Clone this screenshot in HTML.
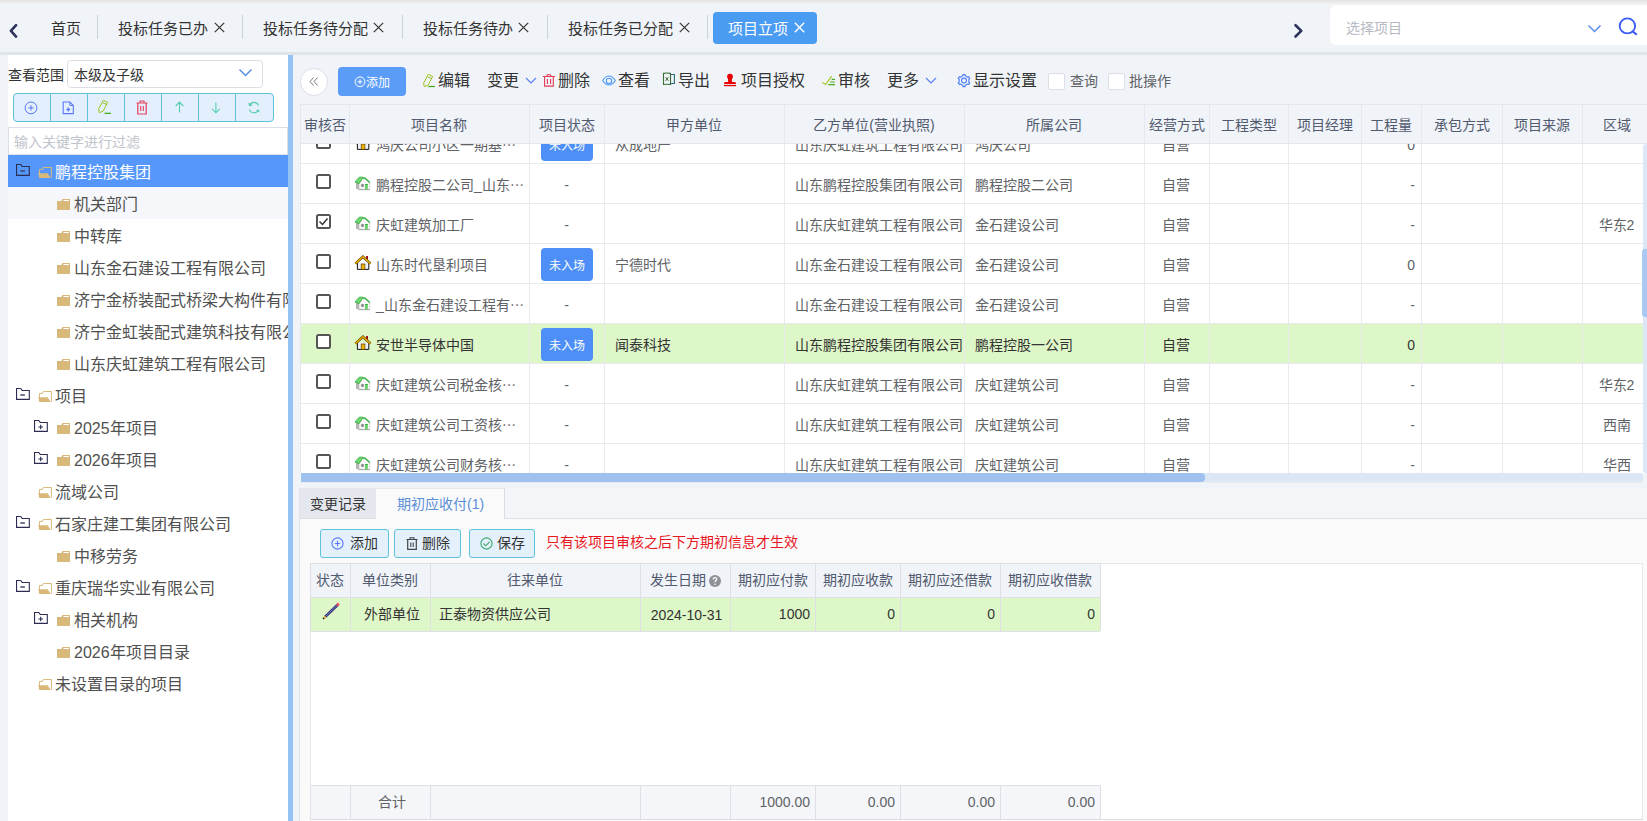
<!DOCTYPE html><html lang="zh-CN"><head><meta charset="utf-8"><style>
html,body{margin:0;padding:0}
body{width:1647px;height:821px;overflow:hidden;position:relative;background:#f0f3f8;font-family:"Liberation Sans",sans-serif}
.t{position:absolute;white-space:nowrap}
.b{position:absolute;box-sizing:border-box}
svg.b{overflow:visible}
</style></head><body>
<div class="b" style="left:0px;top:0px;width:1647px;height:5px;background:linear-gradient(#e3e3e3,#f6f6f6)"></div>
<div class="b" style="left:0px;top:52px;width:1647px;height:3px;background:#dfe3ea"></div>
<svg class="b" style="left:8px;top:22px" width="12" height="18" viewBox="0 0 12 18"><polyline points="8.1,3.2 2.9,8.9 8.1,14.6" fill="none" stroke="#2d3358" stroke-width="2.6" stroke-linecap="round" stroke-linejoin="round"/></svg>
<div class="t" style="left:51px;top:19px;font-size:15px;line-height:20px;color:#333;">首页</div>
<div class="b" style="left:97px;top:15px;width:1px;height:24px;background:#cdd1d8"></div>
<div class="b" style="left:242px;top:15px;width:1px;height:24px;background:#cdd1d8"></div>
<div class="b" style="left:402px;top:15px;width:1px;height:24px;background:#cdd1d8"></div>
<div class="b" style="left:547px;top:15px;width:1px;height:24px;background:#cdd1d8"></div>
<div class="b" style="left:707px;top:15px;width:1px;height:24px;background:#cdd1d8"></div>
<div class="t" style="left:118px;top:19px;font-size:15px;line-height:20px;color:#333;">投标任务已办</div>
<svg class="b" style="left:214px;top:22px" width="11" height="11" viewBox="0 0 11 11"><path d="M0.8,0.8 L10.2,10.2 M10.2,0.8 L0.8,10.2" stroke="#333" stroke-width="1.2" fill="none"/></svg>
<div class="t" style="left:263px;top:19px;font-size:15px;line-height:20px;color:#333;">投标任务待分配</div>
<svg class="b" style="left:373px;top:22px" width="11" height="11" viewBox="0 0 11 11"><path d="M0.8,0.8 L10.2,10.2 M10.2,0.8 L0.8,10.2" stroke="#333" stroke-width="1.2" fill="none"/></svg>
<div class="t" style="left:423px;top:19px;font-size:15px;line-height:20px;color:#333;">投标任务待办</div>
<svg class="b" style="left:518px;top:22px" width="11" height="11" viewBox="0 0 11 11"><path d="M0.8,0.8 L10.2,10.2 M10.2,0.8 L0.8,10.2" stroke="#333" stroke-width="1.2" fill="none"/></svg>
<div class="t" style="left:568px;top:19px;font-size:15px;line-height:20px;color:#333;">投标任务已分配</div>
<svg class="b" style="left:679px;top:22px" width="11" height="11" viewBox="0 0 11 11"><path d="M0.8,0.8 L10.2,10.2 M10.2,0.8 L0.8,10.2" stroke="#333" stroke-width="1.2" fill="none"/></svg>
<div class="b" style="left:713px;top:12px;width:104px;height:32px;background:#4a9bf2;border-radius:4px"></div>
<div class="t" style="left:728px;top:19px;font-size:15px;line-height:20px;color:#fff;">项目立项</div>
<svg class="b" style="left:794px;top:22px" width="11" height="11" viewBox="0 0 11 11"><path d="M0.8,0.8 L10.2,10.2 M10.2,0.8 L0.8,10.2" stroke="#fff" stroke-width="1.4" fill="none"/></svg>
<svg class="b" style="left:1291px;top:22px" width="12" height="18" viewBox="0 0 12 18"><polyline points="4.5,3.2 10.3,8.85 4.5,14.5" fill="none" stroke="#2d3358" stroke-width="2.6" stroke-linecap="round" stroke-linejoin="round"/></svg>
<div class="b" style="left:1330px;top:5px;width:330px;height:40px;background:#fff;border-radius:6px"></div>
<div class="t" style="left:1346px;top:18px;font-size:14px;line-height:20px;color:#b6bac2;">选择项目</div>
<svg class="b" style="left:1587px;top:24px" width="15" height="10" viewBox="0 0 15 10"><polyline points="1.5,1.5 7.5,7.5 13.5,1.5" fill="none" stroke="#5b8de6" stroke-width="1.5"/></svg>
<svg class="b" style="left:1617px;top:16px" width="22" height="21" viewBox="0 0 22 21"><ellipse cx="10.4" cy="9.9" rx="7.7" ry="7.5" fill="none" stroke="#3d5ef5" stroke-width="1.9"/><line x1="16" y1="15.6" x2="19.2" y2="18.2" stroke="#3d5ef5" stroke-width="2.1" stroke-linecap="round"/></svg>
<div class="b" style="left:8px;top:55px;width:280px;height:766px;background:#fff"></div>
<div class="b" style="left:288px;top:55px;width:5px;height:766px;background:#95c2f5"></div>
<div class="t" style="left:8px;top:65px;font-size:14px;line-height:20px;color:#333;">查看范围</div>
<div class="b" style="left:67px;top:60px;width:196px;height:28px;border:1px solid #dcdfe6;border-radius:4px;background:#fff"></div>
<div class="t" style="left:74px;top:65px;font-size:14px;line-height:20px;color:#333;">本级及子级</div>
<svg class="b" style="left:238px;top:68px" width="16" height="10" viewBox="0 0 16 10"><polyline points="1.5,1.5 7.5,7.5 13.5,1.5" fill="none" stroke="#5b8de6" stroke-width="1.5"/></svg>
<div class="b" style="left:13px;top:93px;width:261px;height:29px;background:#e3effc;border:1px solid #5ec2da;border-radius:4px"></div>
<div class="b" style="left:50px;top:93px;width:1px;height:29px;background:#5ec2da"></div>
<div class="b" style="left:87px;top:93px;width:1px;height:29px;background:#5ec2da"></div>
<div class="b" style="left:124px;top:93px;width:1px;height:29px;background:#5ec2da"></div>
<div class="b" style="left:161px;top:93px;width:1px;height:29px;background:#5ec2da"></div>
<div class="b" style="left:198px;top:93px;width:1px;height:29px;background:#5ec2da"></div>
<div class="b" style="left:235px;top:93px;width:1px;height:29px;background:#5ec2da"></div>
<svg class="b" style="left:24px;top:101px" width="14" height="14" viewBox="0 0 14 14"><circle cx="7" cy="6.9" r="5.9" fill="none" stroke="#5a78f8" stroke-width="1"/><path d="M7,4.2 V9.6 M4.3,6.9 H9.7" stroke="#5a78f8" stroke-width="1"/></svg>
<svg class="b" style="left:62px;top:101px" width="13" height="14" viewBox="0 0 13 14"><path d="M1.2,1 H7.8 L11.3,4.5 V12.6 H1.2 Z" fill="none" stroke="#5a78f8" stroke-width="1.1"/><path d="M7.8,1 V4.5 H11.3" fill="none" stroke="#5a78f8" stroke-width="0.9"/><path d="M6.3,6.6 V10.4 M4.4,8.5 H8.2" stroke="#5a78f8" stroke-width="1.3"/></svg>
<svg class="b" style="left:97px;top:99px" width="15" height="15" viewBox="0 0 15 15"><path d="M2.3,13.6 L1.6,10 L6.3,1.3 L10.7,3.4 L6,12.3 Z" fill="none" stroke="#a2c21c" stroke-width="1"/><path d="M5.8,3.9 L9.9,5.6" stroke="#8fc020" stroke-width="1"/><path d="M7.5,14.3 H14" stroke="#3aa812" stroke-width="1.2"/></svg>
<svg class="b" style="left:136px;top:100px" width="12" height="15" viewBox="0 0 12 15"><path d="M0.5,3 H11.5 M4,3 V1 H8 V3" fill="none" stroke="#e8405a" stroke-width="1.1"/><path d="M1.8,3 V14 H10.2 V3" fill="none" stroke="#e8405a" stroke-width="1.2"/><path d="M4.7,6 V11 M7.3,6 V11" stroke="#e8405a" stroke-width="1.1"/></svg>
<svg class="b" style="left:175px;top:101px" width="10" height="12" viewBox="0 0 10 12"><path d="M4.5,1 V11.5 M0.6,5 L4.5,1 L8.4,5" fill="none" stroke="#57cdb0" stroke-width="1.1"/></svg>
<svg class="b" style="left:211px;top:102px" width="10" height="12" viewBox="0 0 10 12"><path d="M4.9,0.5 V10.8 M1,6.8 L4.9,10.8 L8.8,6.8" fill="none" stroke="#57cdb0" stroke-width="1.1"/></svg>
<svg class="b" style="left:248px;top:102px" width="13" height="12" viewBox="0 0 13 12"><path d="M10.6,3.4 A4.9,4.9 0 0 0 1.6,3.2" fill="none" stroke="#57cdb0" stroke-width="1.1"/><path d="M1.4,7.6 A4.9,4.9 0 0 0 10.4,7.9" fill="none" stroke="#57cdb0" stroke-width="1.1"/><path d="M0.8,0.8 L1.5,3.6 L4.2,2.9" fill="none" stroke="#57cdb0" stroke-width="1.1"/><path d="M11.6,10.6 L10.9,7.4 L7.9,8.4 Z" fill="#57cdb0"/></svg>
<div class="b" style="left:8px;top:127px;width:280px;height:28px;border:1px solid #dcdfe6;background:#fff"></div>
<div class="t" style="left:14px;top:132px;font-size:14px;line-height:20px;color:#c0c4cc;">输入关键字进行过滤</div>
<div class="b" style="left:8px;top:155px;width:280px;height:560px;overflow:hidden">
<div class="b" style="left:0px;top:0px;width:280px;height:32px;background:#5597fa"></div>
<svg class="b" style="left:8px;top:9px" width="14" height="12" viewBox="0 0 14 12"><path d="M0.55,11.4 V0.55 H4.8 L6.2,2.5 H13.3 V11.4 Z" fill="none" stroke="#2b2d52" stroke-width="1.1"/><path d="M4.3,7 H8.9" stroke="#3a4060" stroke-width="1.4"/></svg>
<svg class="b" style="left:30px;top:12px" width="14" height="11" viewBox="0 0 14 11"><path d="M1.5,10.8 V2.4 H4.5 L5.3,0.5 H13.4 V10.8" fill="none" stroke="#d8b979" stroke-width="1"/><path d="M0,6.2 H9.7 L12.6,10.9 H1.9 Z" fill="#d8b979"/></svg>
<div class="t" style="left:47px;top:8px;font-size:16px;line-height:20px;color:#fff;">鹏程控股集团</div>
<div class="b" style="left:0px;top:32px;width:280px;height:32px;background:#f5f7fa"></div>
<svg class="b" style="left:49px;top:44px" width="13" height="11" viewBox="0 0 13 11"><path d="M0,2 H4.3 L5.3,0 H13 V11 H0 Z" fill="#d8b979"/><path d="M6.5,1.5 H11.9" stroke="#fff" stroke-width="1" fill="none"/></svg>
<div class="t" style="left:66px;top:40px;font-size:16px;line-height:20px;color:#505050;">机关部门</div>
<svg class="b" style="left:49px;top:76px" width="13" height="11" viewBox="0 0 13 11"><path d="M0,2 H4.3 L5.3,0 H13 V11 H0 Z" fill="#d8b979"/><path d="M6.5,1.5 H11.9" stroke="#fff" stroke-width="1" fill="none"/></svg>
<div class="t" style="left:66px;top:72px;font-size:16px;line-height:20px;color:#505050;">中转库</div>
<svg class="b" style="left:49px;top:108px" width="13" height="11" viewBox="0 0 13 11"><path d="M0,2 H4.3 L5.3,0 H13 V11 H0 Z" fill="#d8b979"/><path d="M6.5,1.5 H11.9" stroke="#fff" stroke-width="1" fill="none"/></svg>
<div class="t" style="left:66px;top:104px;font-size:16px;line-height:20px;color:#505050;">山东金石建设工程有限公司</div>
<svg class="b" style="left:49px;top:140px" width="13" height="11" viewBox="0 0 13 11"><path d="M0,2 H4.3 L5.3,0 H13 V11 H0 Z" fill="#d8b979"/><path d="M6.5,1.5 H11.9" stroke="#fff" stroke-width="1" fill="none"/></svg>
<div class="t" style="left:66px;top:136px;font-size:16px;line-height:20px;color:#505050;">济宁金桥装配式桥梁大构件有限公司</div>
<svg class="b" style="left:49px;top:172px" width="13" height="11" viewBox="0 0 13 11"><path d="M0,2 H4.3 L5.3,0 H13 V11 H0 Z" fill="#d8b979"/><path d="M6.5,1.5 H11.9" stroke="#fff" stroke-width="1" fill="none"/></svg>
<div class="t" style="left:66px;top:168px;font-size:16px;line-height:20px;color:#505050;">济宁金虹装配式建筑科技有限公司</div>
<svg class="b" style="left:49px;top:204px" width="13" height="11" viewBox="0 0 13 11"><path d="M0,2 H4.3 L5.3,0 H13 V11 H0 Z" fill="#d8b979"/><path d="M6.5,1.5 H11.9" stroke="#fff" stroke-width="1" fill="none"/></svg>
<div class="t" style="left:66px;top:200px;font-size:16px;line-height:20px;color:#505050;">山东庆虹建筑工程有限公司</div>
<svg class="b" style="left:8px;top:233px" width="14" height="12" viewBox="0 0 14 12"><path d="M0.55,11.4 V0.55 H4.8 L6.2,2.5 H13.3 V11.4 Z" fill="none" stroke="#2b2d52" stroke-width="1.1"/><path d="M4.3,7 H8.9" stroke="#3a4060" stroke-width="1.4"/></svg>
<svg class="b" style="left:30px;top:236px" width="14" height="11" viewBox="0 0 14 11"><path d="M1.5,10.8 V2.4 H4.5 L5.3,0.5 H13.4 V10.8" fill="none" stroke="#d8b979" stroke-width="1"/><path d="M0,6.2 H9.7 L12.6,10.9 H1.9 Z" fill="#d8b979"/></svg>
<div class="t" style="left:47px;top:232px;font-size:16px;line-height:20px;color:#505050;">项目</div>
<svg class="b" style="left:26px;top:265px" width="14" height="12" viewBox="0 0 14 12"><path d="M0.55,11.4 V0.55 H4.8 L6.2,2.5 H13.3 V11.4 Z" fill="none" stroke="#2b2d52" stroke-width="1.1"/><path d="M4.4,7 H9 M6.7,4.7 V9.3" stroke="#2b2d52" stroke-width="1.1"/></svg>
<svg class="b" style="left:49px;top:268px" width="13" height="11" viewBox="0 0 13 11"><path d="M0,2 H4.3 L5.3,0 H13 V11 H0 Z" fill="#d8b979"/><path d="M6.5,1.5 H11.9" stroke="#fff" stroke-width="1" fill="none"/></svg>
<div class="t" style="left:66px;top:264px;font-size:16px;line-height:20px;color:#505050;">2025年项目</div>
<svg class="b" style="left:26px;top:297px" width="14" height="12" viewBox="0 0 14 12"><path d="M0.55,11.4 V0.55 H4.8 L6.2,2.5 H13.3 V11.4 Z" fill="none" stroke="#2b2d52" stroke-width="1.1"/><path d="M4.4,7 H9 M6.7,4.7 V9.3" stroke="#2b2d52" stroke-width="1.1"/></svg>
<svg class="b" style="left:49px;top:300px" width="13" height="11" viewBox="0 0 13 11"><path d="M0,2 H4.3 L5.3,0 H13 V11 H0 Z" fill="#d8b979"/><path d="M6.5,1.5 H11.9" stroke="#fff" stroke-width="1" fill="none"/></svg>
<div class="t" style="left:66px;top:296px;font-size:16px;line-height:20px;color:#505050;">2026年项目</div>
<svg class="b" style="left:30px;top:332px" width="14" height="11" viewBox="0 0 14 11"><path d="M1.5,10.8 V2.4 H4.5 L5.3,0.5 H13.4 V10.8" fill="none" stroke="#d8b979" stroke-width="1"/><path d="M0,6.2 H9.7 L12.6,10.9 H1.9 Z" fill="#d8b979"/></svg>
<div class="t" style="left:47px;top:328px;font-size:16px;line-height:20px;color:#505050;">流域公司</div>
<svg class="b" style="left:8px;top:361px" width="14" height="12" viewBox="0 0 14 12"><path d="M0.55,11.4 V0.55 H4.8 L6.2,2.5 H13.3 V11.4 Z" fill="none" stroke="#2b2d52" stroke-width="1.1"/><path d="M4.3,7 H8.9" stroke="#3a4060" stroke-width="1.4"/></svg>
<svg class="b" style="left:30px;top:364px" width="14" height="11" viewBox="0 0 14 11"><path d="M1.5,10.8 V2.4 H4.5 L5.3,0.5 H13.4 V10.8" fill="none" stroke="#d8b979" stroke-width="1"/><path d="M0,6.2 H9.7 L12.6,10.9 H1.9 Z" fill="#d8b979"/></svg>
<div class="t" style="left:47px;top:360px;font-size:16px;line-height:20px;color:#505050;">石家庄建工集团有限公司</div>
<svg class="b" style="left:49px;top:396px" width="13" height="11" viewBox="0 0 13 11"><path d="M0,2 H4.3 L5.3,0 H13 V11 H0 Z" fill="#d8b979"/><path d="M6.5,1.5 H11.9" stroke="#fff" stroke-width="1" fill="none"/></svg>
<div class="t" style="left:66px;top:392px;font-size:16px;line-height:20px;color:#505050;">中移劳务</div>
<svg class="b" style="left:8px;top:425px" width="14" height="12" viewBox="0 0 14 12"><path d="M0.55,11.4 V0.55 H4.8 L6.2,2.5 H13.3 V11.4 Z" fill="none" stroke="#2b2d52" stroke-width="1.1"/><path d="M4.3,7 H8.9" stroke="#3a4060" stroke-width="1.4"/></svg>
<svg class="b" style="left:30px;top:428px" width="14" height="11" viewBox="0 0 14 11"><path d="M1.5,10.8 V2.4 H4.5 L5.3,0.5 H13.4 V10.8" fill="none" stroke="#d8b979" stroke-width="1"/><path d="M0,6.2 H9.7 L12.6,10.9 H1.9 Z" fill="#d8b979"/></svg>
<div class="t" style="left:47px;top:424px;font-size:16px;line-height:20px;color:#505050;">重庆瑞华实业有限公司</div>
<svg class="b" style="left:26px;top:457px" width="14" height="12" viewBox="0 0 14 12"><path d="M0.55,11.4 V0.55 H4.8 L6.2,2.5 H13.3 V11.4 Z" fill="none" stroke="#2b2d52" stroke-width="1.1"/><path d="M4.4,7 H9 M6.7,4.7 V9.3" stroke="#2b2d52" stroke-width="1.1"/></svg>
<svg class="b" style="left:49px;top:460px" width="13" height="11" viewBox="0 0 13 11"><path d="M0,2 H4.3 L5.3,0 H13 V11 H0 Z" fill="#d8b979"/><path d="M6.5,1.5 H11.9" stroke="#fff" stroke-width="1" fill="none"/></svg>
<div class="t" style="left:66px;top:456px;font-size:16px;line-height:20px;color:#505050;">相关机构</div>
<svg class="b" style="left:49px;top:492px" width="13" height="11" viewBox="0 0 13 11"><path d="M0,2 H4.3 L5.3,0 H13 V11 H0 Z" fill="#d8b979"/><path d="M6.5,1.5 H11.9" stroke="#fff" stroke-width="1" fill="none"/></svg>
<div class="t" style="left:66px;top:488px;font-size:16px;line-height:20px;color:#505050;">2026年项目目录</div>
<svg class="b" style="left:30px;top:524px" width="14" height="11" viewBox="0 0 14 11"><path d="M1.5,10.8 V2.4 H4.5 L5.3,0.5 H13.4 V10.8" fill="none" stroke="#d8b979" stroke-width="1"/><path d="M0,6.2 H9.7 L12.6,10.9 H1.9 Z" fill="#d8b979"/></svg>
<div class="t" style="left:47px;top:520px;font-size:16px;line-height:20px;color:#505050;">未设置目录的项目</div>
</div>
<div class="b" style="left:300px;top:68px;width:28px;height:28px;border:1px solid #dcdfe6;border-radius:50%;background:#fff"></div>
<svg class="b" style="left:309px;top:77px" width="10" height="10" viewBox="0 0 10 10"><polyline points="4.6,0.5 1,4.5 4.6,8.5" fill="none" stroke="#666" stroke-width="0.9"/><polyline points="8.6,0.5 5,4.5 8.6,8.5" fill="none" stroke="#666" stroke-width="0.9"/></svg>
<div class="b" style="left:338px;top:67px;width:68px;height:29px;background:#5b9cf8;border-radius:4px"></div>
<svg class="b" style="left:354px;top:76px" width="12" height="12" viewBox="0 0 12 12"><circle cx="6" cy="5.8" r="4.9" fill="none" stroke="#fff" stroke-width="1"/><path d="M6,3.3 V8.3 M3.5,5.8 H8.5" stroke="#fff" stroke-width="1"/></svg>
<div class="t" style="left:366px;top:73px;font-size:12px;line-height:20px;color:#fff;">添加</div>
<svg class="b" style="left:422px;top:73px" width="15" height="15" viewBox="0 0 15 15"><path d="M2.3,13.6 L1.6,10 L6.3,1.3 L10.7,3.4 L6,12.3 Z" fill="none" stroke="#a2c21c" stroke-width="1"/><path d="M5.8,3.9 L9.9,5.6" stroke="#8fc020" stroke-width="1"/><path d="M6.3,13.5 H12.9" stroke="#3aa812" stroke-width="1.2"/></svg>
<div class="t" style="left:438px;top:71px;font-size:16px;line-height:20px;color:#333;">编辑</div>
<div class="t" style="left:487px;top:71px;font-size:16px;line-height:20px;color:#333;">变更</div>
<svg class="b" style="left:525px;top:77px" width="12" height="8" viewBox="0 0 12 8"><polyline points="1,1 6,6 11,1" fill="none" stroke="#5c7ff0" stroke-width="1.2"/></svg>
<svg class="b" style="left:542px;top:73px" width="14" height="15" viewBox="0 0 14 15"><path d="M0.9,3.5 H12.9 M4.8,3.5 L5.3,1.8 H8.5 L9,3.5" fill="none" stroke="#e63a55" stroke-width="1.1"/><path d="M2.6,3.5 V13.1 H11.3 V3.5" fill="none" stroke="#e63a55" stroke-width="1.1"/><path d="M5.4,6 V11 M8.6,6 V11" stroke="#e63a55" stroke-width="1.1"/></svg>
<div class="t" style="left:558px;top:71px;font-size:16px;line-height:20px;color:#333;">删除</div>
<svg class="b" style="left:602px;top:75px" width="16" height="11" viewBox="0 0 16 11"><path d="M0.6,5.5 Q3.5,1 7,1 Q10.5,1 13.4,5.5 Q10.5,10 7,10 Q3.5,10 0.6,5.5 Z" fill="none" stroke="#4d9cf8" stroke-width="1.1"/><circle cx="7" cy="5.9" r="2.7" fill="none" stroke="#4d9cf8" stroke-width="1.1"/></svg>
<div class="t" style="left:618px;top:71px;font-size:16px;line-height:20px;color:#333;">查看</div>
<svg class="b" style="left:662px;top:72px" width="14" height="14" viewBox="0 0 14 14"><path d="M1.5,1.4 Q4.5,0.7 8.5,1.4 V12.5 Q4.5,11.9 1.5,12.5 Z" fill="none" stroke="#3b6e34" stroke-width="1.1"/><path d="M8.5,2.5 H12.4 V11.5 H8.5" fill="none" stroke="#2a6a78" stroke-width="1.1"/><path d="M3.6,5.2 L6.4,8.8 M6.4,5.2 L3.6,8.8" stroke="#3b6e34" stroke-width="1"/></svg>
<div class="t" style="left:678px;top:71px;font-size:16px;line-height:20px;color:#333;">导出</div>
<svg class="b" style="left:723px;top:73px" width="14" height="15" viewBox="0 0 14 15"><circle cx="7" cy="3.6" r="2.9" fill="#e80000"/><rect x="5.1" y="4" width="3.8" height="5.2" fill="#e80000"/><path d="M1.6,9 H12.4 L13,10.9 H1 Z" fill="#e80000"/><rect x="1" y="11.9" width="12" height="1.3" fill="#e80000"/></svg>
<div class="t" style="left:741px;top:71px;font-size:16px;line-height:20px;color:#333;">项目授权</div>
<svg class="b" style="left:821px;top:74px" width="15" height="13" viewBox="0 0 15 13"><polyline points="1.3,8.4 4.6,10.5 10.6,2.1" fill="none" stroke="#a6c21e" stroke-width="1.1"/><path d="M10.6,5.4 H14 M9.2,8 H13.8 M7.2,10.6 H14" stroke="#4aaa20" stroke-width="1.1"/></svg>
<div class="t" style="left:838px;top:71px;font-size:16px;line-height:20px;color:#333;">审核</div>
<div class="t" style="left:887px;top:71px;font-size:16px;line-height:20px;color:#333;">更多</div>
<svg class="b" style="left:925px;top:77px" width="12" height="8" viewBox="0 0 12 8"><polyline points="1,1 6,6 11,1" fill="none" stroke="#5c7ff0" stroke-width="1.2"/></svg>
<svg class="b" style="left:957px;top:74px" width="14" height="14" viewBox="0 0 14 14"><path d="M4.55,2.36 L5.81,1.85 L5.94,0.59 L8.06,0.59 L8.19,1.85 L9.45,2.36 L10.52,3.20 L11.67,2.68 L12.73,4.51 L11.71,5.25 L11.90,6.60 L11.71,7.95 L12.73,8.69 L11.67,10.52 L10.52,10.00 L9.45,10.84 L8.19,11.35 L8.06,12.61 L5.94,12.61 L5.81,11.35 L4.55,10.84 L3.48,10.00 L2.33,10.52 L1.27,8.69 L2.29,7.95 L2.10,6.60 L2.29,5.25 L1.27,4.51 L2.33,2.68 L3.48,3.20 Z" fill="none" stroke="#4a7df5" stroke-width="1.1" stroke-linejoin="round"/><circle cx="7" cy="6.6" r="2.5" fill="none" stroke="#4a7df5" stroke-width="1.1"/></svg>
<div class="t" style="left:973px;top:71px;font-size:16px;line-height:20px;color:#333;">显示设置</div>
<div class="b" style="left:1048px;top:73px;width:17px;height:17px;border:1px solid #dcdfe6;border-radius:2px;background:#fff"></div>
<div class="t" style="left:1070px;top:71px;font-size:14px;line-height:20px;color:#606266;">查询</div>
<div class="b" style="left:1108px;top:73px;width:17px;height:17px;border:1px solid #dcdfe6;border-radius:2px;background:#fff"></div>
<div class="t" style="left:1129px;top:71px;font-size:14px;line-height:20px;color:#606266;">批操作</div>
<div class="b" style="left:300px;top:143px;width:1347px;height:330px;background:#fff"></div>
<div class="b" style="left:300px;top:163px;width:1343px;height:1px;background:#e8eaee"></div>
<svg class="b" style="left:316px;top:134px" width="15" height="15" viewBox="0 0 15 15"><rect x="1" y="1" width="13" height="13" rx="1.5" fill="#fff" stroke="#555" stroke-width="2"/></svg>
<svg class="b" style="left:355px;top:136px" width="17" height="14" viewBox="0 0 17 14"><rect x="11.1" y="0" width="1.9" height="3.6" fill="#a00010"/><path d="M2.4,6.8 V13.4 H13.8 V6.8" fill="#eef0fa" stroke="#111" stroke-width="1"/><polyline points="0.4,7.6 7.9,0.8 15.5,7.6" fill="none" stroke="#5a3c00" stroke-width="2.6"/><polyline points="0.4,7.6 7.9,0.8 15.5,7.6" fill="none" stroke="#e2ac00" stroke-width="1.5"/><rect x="6.2" y="8" width="3.7" height="5.4" fill="#e8b400" stroke="#604000" stroke-width="0.7"/></svg>
<div class="t" style="left:376px;top:135px;font-size:14px;line-height:20px;color:#606266;">鸿庆公司小区一期基⋯</div>
<div class="b" style="left:541px;top:128px;width:52px;height:33px;background:#4d8ff7;border-radius:4px"></div>
<div class="t" style="left:541px;top:136px;font-size:12px;line-height:20px;color:#fff;text-align:center;width:52px;overflow:hidden">未入场</div>
<div class="t" style="left:615px;top:135px;font-size:14px;line-height:20px;color:#606266;">从成地产</div>
<div class="t" style="left:795px;top:135px;font-size:14px;line-height:20px;color:#606266;">山东庆虹建筑工程有限公司</div>
<div class="t" style="left:975px;top:135px;font-size:14px;line-height:20px;color:#606266;">鸿庆公司</div>
<div class="t" style="left:1143px;top:135px;font-size:14px;line-height:20px;color:#606266;text-align:center;width:65px;overflow:hidden">自营</div>
<div class="t" style="left:1367px;top:135px;font-size:14px;line-height:20px;color:#606266;text-align:right;width:48px;overflow:hidden">0</div>
<div class="b" style="left:300px;top:203px;width:1343px;height:1px;background:#e8eaee"></div>
<svg class="b" style="left:316px;top:174px" width="15" height="15" viewBox="0 0 15 15"><rect x="1" y="1" width="13" height="13" rx="1.5" fill="#fff" stroke="#555" stroke-width="2"/></svg>
<svg class="b" style="left:355px;top:177px" width="16" height="14" viewBox="0 0 16 14"><path d="M1,5.2 V11.8 L3.5,12.6 H4.2 V6.2 Z" fill="#b4b4b4"/><path d="M4,6.5 L9.7,1 L14.8,5.6 V12.6 H4 Z" fill="#f6f6f6" stroke="#b8b8b8" stroke-width="0.5"/><path d="M0,5 L4.3,0.2 H7.9 L4.1,6.6 Z" fill="#74d874" stroke="#2fae3a" stroke-width="0.9"/><path d="M7.5,1.1 L9.7,0.9 L14.8,5.6" fill="none" stroke="#30b040" stroke-width="1.3"/><rect x="6.3" y="7.2" width="2.4" height="2.5" fill="#707070"/><rect x="10" y="7.2" width="2.8" height="5.4" fill="#66d066"/><rect x="10" y="7.2" width="2.8" height="0.9" fill="#2ea83a"/><path d="M3.5,12.6 H14.8" stroke="#999" stroke-width="0.8"/></svg>
<div class="t" style="left:376px;top:175px;font-size:14px;line-height:20px;color:#606266;">鹏程控股二公司_山东⋯</div>
<div class="t" style="left:529px;top:175px;font-size:14px;line-height:20px;color:#606266;text-align:center;width:75px;overflow:hidden">-</div>
<div class="t" style="left:795px;top:175px;font-size:14px;line-height:20px;color:#606266;">山东鹏程控股集团有限公司</div>
<div class="t" style="left:975px;top:175px;font-size:14px;line-height:20px;color:#606266;">鹏程控股二公司</div>
<div class="t" style="left:1143px;top:175px;font-size:14px;line-height:20px;color:#606266;text-align:center;width:65px;overflow:hidden">自营</div>
<div class="t" style="left:1367px;top:175px;font-size:14px;line-height:20px;color:#606266;text-align:right;width:48px;overflow:hidden">-</div>
<div class="b" style="left:300px;top:243px;width:1343px;height:1px;background:#e8eaee"></div>
<svg class="b" style="left:316px;top:214px" width="15" height="15" viewBox="0 0 15 15"><rect x="1" y="1" width="13" height="13" rx="1.5" fill="#fff" stroke="#555" stroke-width="2"/><polyline points="3.5,7.5 6.5,10.5 11.5,4.5" fill="none" stroke="#333" stroke-width="1.5"/></svg>
<svg class="b" style="left:355px;top:217px" width="16" height="14" viewBox="0 0 16 14"><path d="M1,5.2 V11.8 L3.5,12.6 H4.2 V6.2 Z" fill="#b4b4b4"/><path d="M4,6.5 L9.7,1 L14.8,5.6 V12.6 H4 Z" fill="#f6f6f6" stroke="#b8b8b8" stroke-width="0.5"/><path d="M0,5 L4.3,0.2 H7.9 L4.1,6.6 Z" fill="#74d874" stroke="#2fae3a" stroke-width="0.9"/><path d="M7.5,1.1 L9.7,0.9 L14.8,5.6" fill="none" stroke="#30b040" stroke-width="1.3"/><rect x="6.3" y="7.2" width="2.4" height="2.5" fill="#707070"/><rect x="10" y="7.2" width="2.8" height="5.4" fill="#66d066"/><rect x="10" y="7.2" width="2.8" height="0.9" fill="#2ea83a"/><path d="M3.5,12.6 H14.8" stroke="#999" stroke-width="0.8"/></svg>
<div class="t" style="left:376px;top:215px;font-size:14px;line-height:20px;color:#606266;">庆虹建筑加工厂</div>
<div class="t" style="left:529px;top:215px;font-size:14px;line-height:20px;color:#606266;text-align:center;width:75px;overflow:hidden">-</div>
<div class="t" style="left:795px;top:215px;font-size:14px;line-height:20px;color:#606266;">山东庆虹建筑工程有限公司</div>
<div class="t" style="left:975px;top:215px;font-size:14px;line-height:20px;color:#606266;">金石建设公司</div>
<div class="t" style="left:1143px;top:215px;font-size:14px;line-height:20px;color:#606266;text-align:center;width:65px;overflow:hidden">自营</div>
<div class="t" style="left:1367px;top:215px;font-size:14px;line-height:20px;color:#606266;text-align:right;width:48px;overflow:hidden">-</div>
<div class="t" style="left:1582px;top:215px;font-size:14px;line-height:20px;color:#606266;text-align:center;width:69px;overflow:hidden">华东2</div>
<div class="b" style="left:300px;top:283px;width:1343px;height:1px;background:#e8eaee"></div>
<svg class="b" style="left:316px;top:254px" width="15" height="15" viewBox="0 0 15 15"><rect x="1" y="1" width="13" height="13" rx="1.5" fill="#fff" stroke="#555" stroke-width="2"/></svg>
<svg class="b" style="left:355px;top:256px" width="17" height="14" viewBox="0 0 17 14"><rect x="11.1" y="0" width="1.9" height="3.6" fill="#a00010"/><path d="M2.4,6.8 V13.4 H13.8 V6.8" fill="#eef0fa" stroke="#111" stroke-width="1"/><polyline points="0.4,7.6 7.9,0.8 15.5,7.6" fill="none" stroke="#5a3c00" stroke-width="2.6"/><polyline points="0.4,7.6 7.9,0.8 15.5,7.6" fill="none" stroke="#e2ac00" stroke-width="1.5"/><rect x="6.2" y="8" width="3.7" height="5.4" fill="#e8b400" stroke="#604000" stroke-width="0.7"/></svg>
<div class="t" style="left:376px;top:255px;font-size:14px;line-height:20px;color:#606266;">山东时代垦利项目</div>
<div class="b" style="left:541px;top:248px;width:52px;height:33px;background:#4d8ff7;border-radius:4px"></div>
<div class="t" style="left:541px;top:256px;font-size:12px;line-height:20px;color:#fff;text-align:center;width:52px;overflow:hidden">未入场</div>
<div class="t" style="left:615px;top:255px;font-size:14px;line-height:20px;color:#606266;">宁德时代</div>
<div class="t" style="left:795px;top:255px;font-size:14px;line-height:20px;color:#606266;">山东金石建设工程有限公司</div>
<div class="t" style="left:975px;top:255px;font-size:14px;line-height:20px;color:#606266;">金石建设公司</div>
<div class="t" style="left:1143px;top:255px;font-size:14px;line-height:20px;color:#606266;text-align:center;width:65px;overflow:hidden">自营</div>
<div class="t" style="left:1367px;top:255px;font-size:14px;line-height:20px;color:#606266;text-align:right;width:48px;overflow:hidden">0</div>
<div class="b" style="left:300px;top:323px;width:1343px;height:1px;background:#e8eaee"></div>
<svg class="b" style="left:316px;top:294px" width="15" height="15" viewBox="0 0 15 15"><rect x="1" y="1" width="13" height="13" rx="1.5" fill="#fff" stroke="#555" stroke-width="2"/></svg>
<svg class="b" style="left:355px;top:297px" width="16" height="14" viewBox="0 0 16 14"><path d="M1,5.2 V11.8 L3.5,12.6 H4.2 V6.2 Z" fill="#b4b4b4"/><path d="M4,6.5 L9.7,1 L14.8,5.6 V12.6 H4 Z" fill="#f6f6f6" stroke="#b8b8b8" stroke-width="0.5"/><path d="M0,5 L4.3,0.2 H7.9 L4.1,6.6 Z" fill="#74d874" stroke="#2fae3a" stroke-width="0.9"/><path d="M7.5,1.1 L9.7,0.9 L14.8,5.6" fill="none" stroke="#30b040" stroke-width="1.3"/><rect x="6.3" y="7.2" width="2.4" height="2.5" fill="#707070"/><rect x="10" y="7.2" width="2.8" height="5.4" fill="#66d066"/><rect x="10" y="7.2" width="2.8" height="0.9" fill="#2ea83a"/><path d="M3.5,12.6 H14.8" stroke="#999" stroke-width="0.8"/></svg>
<div class="t" style="left:376px;top:295px;font-size:14px;line-height:20px;color:#606266;">_山东金石建设工程有⋯</div>
<div class="t" style="left:529px;top:295px;font-size:14px;line-height:20px;color:#606266;text-align:center;width:75px;overflow:hidden">-</div>
<div class="t" style="left:795px;top:295px;font-size:14px;line-height:20px;color:#606266;">山东金石建设工程有限公司</div>
<div class="t" style="left:975px;top:295px;font-size:14px;line-height:20px;color:#606266;">金石建设公司</div>
<div class="t" style="left:1143px;top:295px;font-size:14px;line-height:20px;color:#606266;text-align:center;width:65px;overflow:hidden">自营</div>
<div class="t" style="left:1367px;top:295px;font-size:14px;line-height:20px;color:#606266;text-align:right;width:48px;overflow:hidden">-</div>
<div class="b" style="left:300px;top:324px;width:1343px;height:40px;background:#def7c8"></div>
<div class="b" style="left:300px;top:363px;width:1343px;height:1px;background:#e8eaee"></div>
<svg class="b" style="left:316px;top:334px" width="15" height="15" viewBox="0 0 15 15"><rect x="1" y="1" width="13" height="13" rx="1.5" fill="#fff" stroke="#555" stroke-width="2"/></svg>
<svg class="b" style="left:355px;top:336px" width="17" height="14" viewBox="0 0 17 14"><rect x="11.1" y="0" width="1.9" height="3.6" fill="#a00010"/><path d="M2.4,6.8 V13.4 H13.8 V6.8" fill="#eef0fa" stroke="#111" stroke-width="1"/><polyline points="0.4,7.6 7.9,0.8 15.5,7.6" fill="none" stroke="#5a3c00" stroke-width="2.6"/><polyline points="0.4,7.6 7.9,0.8 15.5,7.6" fill="none" stroke="#e2ac00" stroke-width="1.5"/><rect x="6.2" y="8" width="3.7" height="5.4" fill="#e8b400" stroke="#604000" stroke-width="0.7"/></svg>
<div class="t" style="left:376px;top:335px;font-size:14px;line-height:20px;color:#333;">安世半导体中国</div>
<div class="b" style="left:541px;top:328px;width:52px;height:33px;background:#4d8ff7;border-radius:4px"></div>
<div class="t" style="left:541px;top:336px;font-size:12px;line-height:20px;color:#fff;text-align:center;width:52px;overflow:hidden">未入场</div>
<div class="t" style="left:615px;top:335px;font-size:14px;line-height:20px;color:#333;">闻泰科技</div>
<div class="t" style="left:795px;top:335px;font-size:14px;line-height:20px;color:#333;">山东鹏程控股集团有限公司</div>
<div class="t" style="left:975px;top:335px;font-size:14px;line-height:20px;color:#333;">鹏程控股一公司</div>
<div class="t" style="left:1143px;top:335px;font-size:14px;line-height:20px;color:#333;text-align:center;width:65px;overflow:hidden">自营</div>
<div class="t" style="left:1367px;top:335px;font-size:14px;line-height:20px;color:#333;text-align:right;width:48px;overflow:hidden">0</div>
<div class="b" style="left:300px;top:403px;width:1343px;height:1px;background:#e8eaee"></div>
<svg class="b" style="left:316px;top:374px" width="15" height="15" viewBox="0 0 15 15"><rect x="1" y="1" width="13" height="13" rx="1.5" fill="#fff" stroke="#555" stroke-width="2"/></svg>
<svg class="b" style="left:355px;top:377px" width="16" height="14" viewBox="0 0 16 14"><path d="M1,5.2 V11.8 L3.5,12.6 H4.2 V6.2 Z" fill="#b4b4b4"/><path d="M4,6.5 L9.7,1 L14.8,5.6 V12.6 H4 Z" fill="#f6f6f6" stroke="#b8b8b8" stroke-width="0.5"/><path d="M0,5 L4.3,0.2 H7.9 L4.1,6.6 Z" fill="#74d874" stroke="#2fae3a" stroke-width="0.9"/><path d="M7.5,1.1 L9.7,0.9 L14.8,5.6" fill="none" stroke="#30b040" stroke-width="1.3"/><rect x="6.3" y="7.2" width="2.4" height="2.5" fill="#707070"/><rect x="10" y="7.2" width="2.8" height="5.4" fill="#66d066"/><rect x="10" y="7.2" width="2.8" height="0.9" fill="#2ea83a"/><path d="M3.5,12.6 H14.8" stroke="#999" stroke-width="0.8"/></svg>
<div class="t" style="left:376px;top:375px;font-size:14px;line-height:20px;color:#606266;">庆虹建筑公司税金核⋯</div>
<div class="t" style="left:529px;top:375px;font-size:14px;line-height:20px;color:#606266;text-align:center;width:75px;overflow:hidden">-</div>
<div class="t" style="left:795px;top:375px;font-size:14px;line-height:20px;color:#606266;">山东庆虹建筑工程有限公司</div>
<div class="t" style="left:975px;top:375px;font-size:14px;line-height:20px;color:#606266;">庆虹建筑公司</div>
<div class="t" style="left:1143px;top:375px;font-size:14px;line-height:20px;color:#606266;text-align:center;width:65px;overflow:hidden">自营</div>
<div class="t" style="left:1367px;top:375px;font-size:14px;line-height:20px;color:#606266;text-align:right;width:48px;overflow:hidden">-</div>
<div class="t" style="left:1582px;top:375px;font-size:14px;line-height:20px;color:#606266;text-align:center;width:69px;overflow:hidden">华东2</div>
<div class="b" style="left:300px;top:443px;width:1343px;height:1px;background:#e8eaee"></div>
<svg class="b" style="left:316px;top:414px" width="15" height="15" viewBox="0 0 15 15"><rect x="1" y="1" width="13" height="13" rx="1.5" fill="#fff" stroke="#555" stroke-width="2"/></svg>
<svg class="b" style="left:355px;top:417px" width="16" height="14" viewBox="0 0 16 14"><path d="M1,5.2 V11.8 L3.5,12.6 H4.2 V6.2 Z" fill="#b4b4b4"/><path d="M4,6.5 L9.7,1 L14.8,5.6 V12.6 H4 Z" fill="#f6f6f6" stroke="#b8b8b8" stroke-width="0.5"/><path d="M0,5 L4.3,0.2 H7.9 L4.1,6.6 Z" fill="#74d874" stroke="#2fae3a" stroke-width="0.9"/><path d="M7.5,1.1 L9.7,0.9 L14.8,5.6" fill="none" stroke="#30b040" stroke-width="1.3"/><rect x="6.3" y="7.2" width="2.4" height="2.5" fill="#707070"/><rect x="10" y="7.2" width="2.8" height="5.4" fill="#66d066"/><rect x="10" y="7.2" width="2.8" height="0.9" fill="#2ea83a"/><path d="M3.5,12.6 H14.8" stroke="#999" stroke-width="0.8"/></svg>
<div class="t" style="left:376px;top:415px;font-size:14px;line-height:20px;color:#606266;">庆虹建筑公司工资核⋯</div>
<div class="t" style="left:529px;top:415px;font-size:14px;line-height:20px;color:#606266;text-align:center;width:75px;overflow:hidden">-</div>
<div class="t" style="left:795px;top:415px;font-size:14px;line-height:20px;color:#606266;">山东庆虹建筑工程有限公司</div>
<div class="t" style="left:975px;top:415px;font-size:14px;line-height:20px;color:#606266;">庆虹建筑公司</div>
<div class="t" style="left:1143px;top:415px;font-size:14px;line-height:20px;color:#606266;text-align:center;width:65px;overflow:hidden">自营</div>
<div class="t" style="left:1367px;top:415px;font-size:14px;line-height:20px;color:#606266;text-align:right;width:48px;overflow:hidden">-</div>
<div class="t" style="left:1582px;top:415px;font-size:14px;line-height:20px;color:#606266;text-align:center;width:69px;overflow:hidden">西南</div>
<div class="b" style="left:300px;top:483px;width:1343px;height:1px;background:#e8eaee"></div>
<svg class="b" style="left:316px;top:454px" width="15" height="15" viewBox="0 0 15 15"><rect x="1" y="1" width="13" height="13" rx="1.5" fill="#fff" stroke="#555" stroke-width="2"/></svg>
<svg class="b" style="left:355px;top:457px" width="16" height="14" viewBox="0 0 16 14"><path d="M1,5.2 V11.8 L3.5,12.6 H4.2 V6.2 Z" fill="#b4b4b4"/><path d="M4,6.5 L9.7,1 L14.8,5.6 V12.6 H4 Z" fill="#f6f6f6" stroke="#b8b8b8" stroke-width="0.5"/><path d="M0,5 L4.3,0.2 H7.9 L4.1,6.6 Z" fill="#74d874" stroke="#2fae3a" stroke-width="0.9"/><path d="M7.5,1.1 L9.7,0.9 L14.8,5.6" fill="none" stroke="#30b040" stroke-width="1.3"/><rect x="6.3" y="7.2" width="2.4" height="2.5" fill="#707070"/><rect x="10" y="7.2" width="2.8" height="5.4" fill="#66d066"/><rect x="10" y="7.2" width="2.8" height="0.9" fill="#2ea83a"/><path d="M3.5,12.6 H14.8" stroke="#999" stroke-width="0.8"/></svg>
<div class="t" style="left:376px;top:455px;font-size:14px;line-height:20px;color:#606266;">庆虹建筑公司财务核⋯</div>
<div class="t" style="left:529px;top:455px;font-size:14px;line-height:20px;color:#606266;text-align:center;width:75px;overflow:hidden">-</div>
<div class="t" style="left:795px;top:455px;font-size:14px;line-height:20px;color:#606266;">山东庆虹建筑工程有限公司</div>
<div class="t" style="left:975px;top:455px;font-size:14px;line-height:20px;color:#606266;">庆虹建筑公司</div>
<div class="t" style="left:1143px;top:455px;font-size:14px;line-height:20px;color:#606266;text-align:center;width:65px;overflow:hidden">自营</div>
<div class="t" style="left:1367px;top:455px;font-size:14px;line-height:20px;color:#606266;text-align:right;width:48px;overflow:hidden">-</div>
<div class="t" style="left:1582px;top:455px;font-size:14px;line-height:20px;color:#606266;text-align:center;width:69px;overflow:hidden">华西</div>
<div class="b" style="left:349px;top:143px;width:1px;height:330px;background:#e8eaee"></div>
<div class="b" style="left:529px;top:143px;width:1px;height:330px;background:#e8eaee"></div>
<div class="b" style="left:604px;top:143px;width:1px;height:330px;background:#e8eaee"></div>
<div class="b" style="left:784px;top:143px;width:1px;height:330px;background:#e8eaee"></div>
<div class="b" style="left:964px;top:143px;width:1px;height:330px;background:#e8eaee"></div>
<div class="b" style="left:1144px;top:143px;width:1px;height:330px;background:#e8eaee"></div>
<div class="b" style="left:1209px;top:143px;width:1px;height:330px;background:#e8eaee"></div>
<div class="b" style="left:1288px;top:143px;width:1px;height:330px;background:#e8eaee"></div>
<div class="b" style="left:1361px;top:143px;width:1px;height:330px;background:#e8eaee"></div>
<div class="b" style="left:1421px;top:143px;width:1px;height:330px;background:#e8eaee"></div>
<div class="b" style="left:1502px;top:143px;width:1px;height:330px;background:#e8eaee"></div>
<div class="b" style="left:1582px;top:143px;width:1px;height:330px;background:#e8eaee"></div>
<div class="b" style="left:300px;top:104px;width:1px;height:369px;background:#e4e7ec"></div>
<div class="b" style="left:300px;top:104px;width:1347px;height:40px;background:#f0f3f8;border-top:1px solid #e4e7ec;border-bottom:1px solid #e4e7ec"></div>
<div class="t" style="left:300px;top:115px;font-size:14px;line-height:20px;color:#515a6e;text-align:center;width:49px;overflow:hidden">审核否</div>
<div class="b" style="left:349px;top:104px;width:1px;height:40px;background:#e4e7ec"></div>
<div class="t" style="left:349px;top:115px;font-size:14px;line-height:20px;color:#515a6e;text-align:center;width:180px;overflow:hidden">项目名称</div>
<div class="b" style="left:529px;top:104px;width:1px;height:40px;background:#e4e7ec"></div>
<div class="t" style="left:529px;top:115px;font-size:14px;line-height:20px;color:#515a6e;text-align:center;width:75px;overflow:hidden">项目状态</div>
<div class="b" style="left:604px;top:104px;width:1px;height:40px;background:#e4e7ec"></div>
<div class="t" style="left:604px;top:115px;font-size:14px;line-height:20px;color:#515a6e;text-align:center;width:180px;overflow:hidden">甲方单位</div>
<div class="b" style="left:784px;top:104px;width:1px;height:40px;background:#e4e7ec"></div>
<div class="t" style="left:784px;top:115px;font-size:14px;line-height:20px;color:#515a6e;text-align:center;width:180px;overflow:hidden">乙方单位(营业执照)</div>
<div class="b" style="left:964px;top:104px;width:1px;height:40px;background:#e4e7ec"></div>
<div class="t" style="left:964px;top:115px;font-size:14px;line-height:20px;color:#515a6e;text-align:center;width:180px;overflow:hidden">所属公司</div>
<div class="b" style="left:1144px;top:104px;width:1px;height:40px;background:#e4e7ec"></div>
<div class="t" style="left:1144px;top:115px;font-size:14px;line-height:20px;color:#515a6e;text-align:center;width:65px;overflow:hidden">经营方式</div>
<div class="b" style="left:1209px;top:104px;width:1px;height:40px;background:#e4e7ec"></div>
<div class="t" style="left:1209px;top:115px;font-size:14px;line-height:20px;color:#515a6e;text-align:center;width:79px;overflow:hidden">工程类型</div>
<div class="b" style="left:1288px;top:104px;width:1px;height:40px;background:#e4e7ec"></div>
<div class="t" style="left:1288px;top:115px;font-size:14px;line-height:20px;color:#515a6e;text-align:center;width:73px;overflow:hidden">项目经理</div>
<div class="b" style="left:1361px;top:104px;width:1px;height:40px;background:#e4e7ec"></div>
<div class="t" style="left:1361px;top:115px;font-size:14px;line-height:20px;color:#515a6e;text-align:center;width:60px;overflow:hidden">工程量</div>
<div class="b" style="left:1421px;top:104px;width:1px;height:40px;background:#e4e7ec"></div>
<div class="t" style="left:1421px;top:115px;font-size:14px;line-height:20px;color:#515a6e;text-align:center;width:81px;overflow:hidden">承包方式</div>
<div class="b" style="left:1502px;top:104px;width:1px;height:40px;background:#e4e7ec"></div>
<div class="t" style="left:1502px;top:115px;font-size:14px;line-height:20px;color:#515a6e;text-align:center;width:80px;overflow:hidden">项目来源</div>
<div class="b" style="left:1582px;top:104px;width:1px;height:40px;background:#e4e7ec"></div>
<div class="t" style="left:1582px;top:115px;font-size:14px;line-height:20px;color:#515a6e;text-align:center;width:70px;overflow:hidden">区域</div>
<div class="b" style="left:300px;top:104px;width:1px;height:39px;background:#e4e7ec"></div>
<div class="b" style="left:1643px;top:144px;width:6px;height:329px;background:#dde8f6;border-radius:4px"></div>
<div class="b" style="left:1642px;top:249px;width:5px;height:68px;background:#a9c9f2;border-radius:3px 0 0 3px"></div>
<div class="b" style="left:301px;top:473px;width:1342px;height:9px;background:#dce7f6;border-radius:0 4px 4px 0"></div>
<div class="b" style="left:301px;top:473px;width:904px;height:9px;background:#9fc1f0;border-radius:0 4px 4px 0"></div>
<div class="b" style="left:299px;top:488px;width:1348px;height:333px;background:#fafafa;border-left:1px solid #e0e3e8"></div>
<div class="b" style="left:300px;top:483px;width:1347px;height:5px;background:#f0f3f8"></div>
<div class="b" style="left:300px;top:482px;width:1343px;height:1px;background:#e9ecf0"></div>
<div class="b" style="left:300px;top:488px;width:1347px;height:31px;background:#f3f5f9;border-bottom:1px solid #dde1e6"></div>
<div class="b" style="left:300px;top:488px;width:76px;height:30px;background:#e4e8ee"></div>
<div class="b" style="left:376px;top:488px;width:129px;height:31px;background:#fafafa;border-right:1px solid #d8dde3;border-top:1px solid #e3e8ea"></div>
<div class="t" style="left:310px;top:494px;font-size:14px;line-height:20px;color:#333;">变更记录</div>
<div class="t" style="left:397px;top:494px;font-size:14px;line-height:20px;color:#5b8fd8;">期初应收付(1)</div>
<div class="b" style="left:310px;top:563px;width:1333px;height:257px;background:#fff;border:1px solid #e4e7ec;border-bottom-color:#d9dce2"></div>
<div class="b" style="left:320px;top:529px;width:69px;height:29px;background:#e4f1fc;border:1px solid #5ec2da;border-radius:3px"></div>

<div class="t" style="left:350px;top:533px;font-size:14px;line-height:20px;color:#333;">添加</div>
<svg class="b" style="left:331px;top:537px" width="13" height="13" viewBox="0 0 13 13"><circle cx="6.5" cy="6.5" r="5.6" fill="none" stroke="#5a78f8" stroke-width="1.1"/><path d="M6.5,3.8 V9.2 M3.8,6.5 H9.2" stroke="#5a78f8" stroke-width="1.1"/></svg>
<div class="b" style="left:394px;top:529px;width:67px;height:29px;background:#e4f1fc;border:1px solid #5ec2da;border-radius:3px"></div>

<div class="t" style="left:422px;top:533px;font-size:14px;line-height:20px;color:#333;">删除</div>
<svg class="b" style="left:406px;top:537px" width="12" height="13" viewBox="0 0 12 13"><path d="M0.5,2.5 H11.5 M4,2.5 V0.8 H8 V2.5" fill="none" stroke="#444" stroke-width="1.1"/><path d="M1.7,2.5 V12.3 H10.3 V2.5" fill="none" stroke="#444" stroke-width="1.2"/><path d="M4.8,5.5 V10 M7.2,5.5 V10" stroke="#444" stroke-width="1.1"/></svg>
<div class="b" style="left:469px;top:529px;width:66px;height:29px;background:#e4f1fc;border:1px solid #5ec2da;border-radius:3px"></div>

<div class="t" style="left:497px;top:533px;font-size:14px;line-height:20px;color:#333;">保存</div>
<svg class="b" style="left:480px;top:537px" width="13" height="13" viewBox="0 0 13 13"><circle cx="6.5" cy="6.5" r="5.6" fill="none" stroke="#3aa86a" stroke-width="1.1"/><polyline points="3.5,6.5 5.8,8.8 9.5,4.8" fill="none" stroke="#3aa86a" stroke-width="1.1"/></svg>
<div class="t" style="left:546px;top:532px;font-size:14px;line-height:20px;color:#e8171f;">只有该项目审核之后下方期初信息才生效</div>
<div class="b" style="left:310px;top:563px;width:790px;height:35px;background:#f0f3f8;border-top:1px solid #dee0e5;border-bottom:1px solid #dee0e5;border-left:1px solid #dee0e5"></div>
<div class="b" style="left:310px;top:598px;width:790px;height:34px;background:#def7c8;border-bottom:1px solid #dee0e5;border-left:1px solid #dee0e5"></div>
<div class="b" style="left:310px;top:785px;width:791px;height:34px;background:#f5f6f9;border-top:1px solid #dee0e5;border-left:1px solid #dee0e5"></div>
<div class="b" style="left:310px;top:563px;width:1px;height:68px;background:#dee0e5"></div>
<div class="b" style="left:310px;top:785px;width:1px;height:34px;background:#dee0e5"></div>
<div class="t" style="left:310px;top:570px;font-size:14px;line-height:20px;color:#515a6e;text-align:center;width:40px;overflow:hidden">状态</div>
<div class="b" style="left:350px;top:563px;width:1px;height:68px;background:#dee0e5"></div>
<div class="b" style="left:350px;top:785px;width:1px;height:34px;background:#dee0e5"></div>
<div class="t" style="left:350px;top:570px;font-size:14px;line-height:20px;color:#515a6e;text-align:center;width:80px;overflow:hidden">单位类别</div>
<div class="b" style="left:430px;top:563px;width:1px;height:68px;background:#dee0e5"></div>
<div class="b" style="left:430px;top:785px;width:1px;height:34px;background:#dee0e5"></div>
<div class="t" style="left:430px;top:570px;font-size:14px;line-height:20px;color:#515a6e;text-align:center;width:210px;overflow:hidden">往来单位</div>
<div class="b" style="left:640px;top:563px;width:1px;height:68px;background:#dee0e5"></div>
<div class="b" style="left:640px;top:785px;width:1px;height:34px;background:#dee0e5"></div>
<div class="t" style="left:650px;top:570px;font-size:14px;line-height:20px;color:#515a6e;">发生日期</div>
<svg class="b" style="left:709px;top:575px" width="12" height="12" viewBox="0 0 12 12"><circle cx="6" cy="6" r="6" fill="#8e9196"/><path d="M4.2,4.6 Q4.2,2.6 6,2.6 Q7.8,2.6 7.8,4.3 Q7.8,5.4 6.6,5.9 Q6,6.2 6,7.3" fill="none" stroke="#fff" stroke-width="1.2"/><circle cx="6" cy="9.2" r="0.8" fill="#fff"/></svg>
<div class="b" style="left:730px;top:563px;width:1px;height:68px;background:#dee0e5"></div>
<div class="b" style="left:730px;top:785px;width:1px;height:34px;background:#dee0e5"></div>
<div class="t" style="left:730px;top:570px;font-size:14px;line-height:20px;color:#515a6e;text-align:center;width:85px;overflow:hidden">期初应付款</div>
<div class="b" style="left:815px;top:563px;width:1px;height:68px;background:#dee0e5"></div>
<div class="b" style="left:815px;top:785px;width:1px;height:34px;background:#dee0e5"></div>
<div class="t" style="left:815px;top:570px;font-size:14px;line-height:20px;color:#515a6e;text-align:center;width:85px;overflow:hidden">期初应收款</div>
<div class="b" style="left:900px;top:563px;width:1px;height:68px;background:#dee0e5"></div>
<div class="b" style="left:900px;top:785px;width:1px;height:34px;background:#dee0e5"></div>
<div class="t" style="left:900px;top:570px;font-size:14px;line-height:20px;color:#515a6e;text-align:center;width:100px;overflow:hidden">期初应还借款</div>
<div class="b" style="left:1000px;top:563px;width:1px;height:68px;background:#dee0e5"></div>
<div class="b" style="left:1000px;top:785px;width:1px;height:34px;background:#dee0e5"></div>
<div class="t" style="left:1000px;top:570px;font-size:14px;line-height:20px;color:#515a6e;text-align:center;width:100px;overflow:hidden">期初应收借款</div>
<div class="b" style="left:1100px;top:563px;width:1px;height:68px;background:#dee0e5"></div>
<div class="b" style="left:1100px;top:785px;width:1px;height:34px;background:#dee0e5"></div>
<svg class="b" style="left:322px;top:602px" width="19" height="18" viewBox="0 0 19 18"><path d="M3,15 L16,2.5" stroke="#2a2a6a" stroke-width="2.6" stroke-linecap="butt"/><path d="M3.3,14.7 L15.7,2.8" stroke="#8a84e0" stroke-width="1"/><path d="M14.8,3.5 L16.8,1.5" stroke="#e85060" stroke-width="2.6"/><path d="M1.5,16.5 L3.6,14.6" stroke="#e0b040" stroke-width="2.2"/><path d="M1,17 L2,16" stroke="#111" stroke-width="1.5"/></svg>
<div class="t" style="left:352px;top:604px;font-size:14px;line-height:20px;color:#333;text-align:center;width:80px;overflow:hidden">外部单位</div>
<div class="t" style="left:439px;top:604px;font-size:14px;line-height:20px;color:#333;">正泰物资供应公司</div>
<div class="t" style="left:642px;top:605px;font-size:14px;line-height:20px;color:#333;text-align:center;width:89px;overflow:hidden">2024-10-31</div>
<div class="t" style="left:735px;top:604px;font-size:14px;line-height:20px;color:#333;text-align:right;width:75px;overflow:hidden">1000</div>
<div class="t" style="left:820px;top:604px;font-size:14px;line-height:20px;color:#333;text-align:right;width:75px;overflow:hidden">0</div>
<div class="t" style="left:905px;top:604px;font-size:14px;line-height:20px;color:#333;text-align:right;width:90px;overflow:hidden">0</div>
<div class="t" style="left:1005px;top:604px;font-size:14px;line-height:20px;color:#333;text-align:right;width:90px;overflow:hidden">0</div>
<div class="t" style="left:352px;top:792px;font-size:14px;line-height:20px;color:#606266;text-align:center;width:80px;overflow:hidden">合计</div>
<div class="t" style="left:735px;top:792px;font-size:14px;line-height:20px;color:#606266;text-align:right;width:75px;overflow:hidden">1000.00</div>
<div class="t" style="left:820px;top:792px;font-size:14px;line-height:20px;color:#606266;text-align:right;width:75px;overflow:hidden">0.00</div>
<div class="t" style="left:905px;top:792px;font-size:14px;line-height:20px;color:#606266;text-align:right;width:90px;overflow:hidden">0.00</div>
<div class="t" style="left:1005px;top:792px;font-size:14px;line-height:20px;color:#606266;text-align:right;width:90px;overflow:hidden">0.00</div></body></html>
